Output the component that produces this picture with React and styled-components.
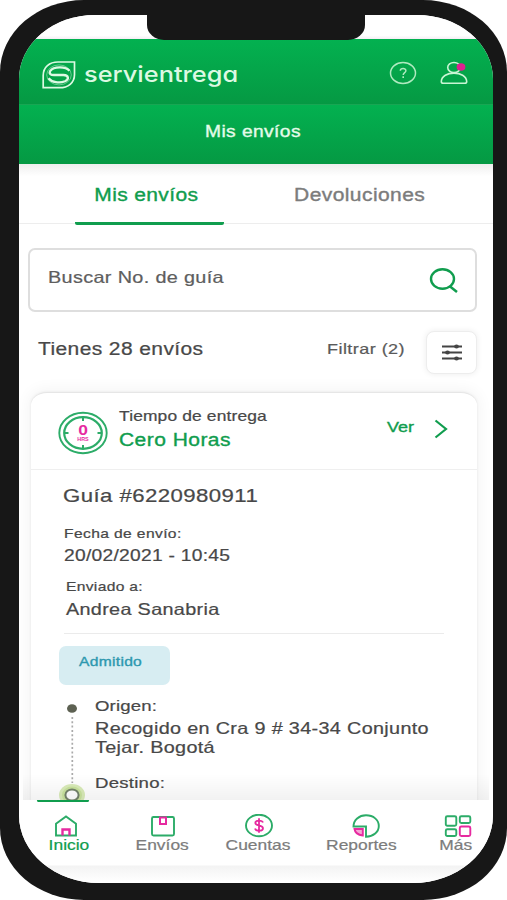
import React from "react"
import styled, { createGlobalStyle } from "styled-components"

const green = "#109d4e"
const pink = "#e62aa0"
const grey = "#7c7c7c"

const App = () => (
  <Phone>
    <GlobalStyle />
    <Notch />
    <Screen>
      <StatusBar />
      <TopBar>
        <Brand>
          <LogoIcon />
          <BrandName>servientrega</BrandName>
        </Brand>
        <Actions>
          <HelpIcon />
          <UserIcon />
        </Actions>
      </TopBar>
      <TitleBar>
        <Text $size={16} $track={0.35} $color="#e4fbe9" $center $bold>
          Mis envíos
        </Text>
      </TitleBar>
      <Tabs>
        <Tab $active>
          <Text $size={17.5} $track={0.3} $color={green} $center $bold>
            Mis envíos
          </Text>
        </Tab>
        <Tab>
          <Text $size={17.5} $track={0.35} $color={grey} $center $bold>
            Devoluciones
          </Text>
        </Tab>
      </Tabs>
      <Content>
        <Search>
          <Text $size={16.5} $track={0.3} $color="#5e5e5e">
            Buscar No. de guía
          </Text>
          <SearchIcon />
        </Search>
        <Summary>
          <Text $size={17.5} $track={0.33}>
            Tienes 28 envíos
          </Text>
          <Filter>
            <FilterLabel>
              <Text $size={15} $track={0.38} $color="#5a5a5a">
                Filtrar (2)
              </Text>
            </FilterLabel>
            <FilterButton>
              <SlidersIcon />
            </FilterButton>
          </Filter>
        </Summary>
        <Card>
          <CardHeader>
            <ClockIcon />
            <Delivery>
              <Text $size={14.5} $track={0.12}>
                Tiempo de entrega
              </Text>
              <Text $size={17.5} $track={0.38} $color={green} $line={28} $bold>
                Cero Horas
              </Text>
            </Delivery>
            <Ver>
              <Text $size={15} $color={green} $bold>
                Ver
              </Text>
            </Ver>
            <Chevron>
              <ChevronIcon />
            </Chevron>
          </CardHeader>
          <Details>
            <Text $size={18.5} $track={0.35} $line={24}>
              Guía #6220980911
            </Text>
            <Field $top={16} $indent={1}>
              <Text $size={13} $track={0.32}>
                Fecha de envío:
              </Text>
              <Text $size={16} $track={0.23} $line={24}>
                20/02/2021 - 10:45
              </Text>
            </Field>
            <Field $top={9} $indent={3}>
              <Text $size={13} $track={0.27}>
                Enviado a:
              </Text>
              <Text $size={16.5} $track={0.27} $line={24}>
                Andrea Sanabria
              </Text>
            </Field>
          </Details>
          <Divider />
          <Badge>
            <Text $size={13} $track={0.25} $color="#2d98af" $bold>
              Admitido
            </Text>
          </Badge>
          <Route>
            <RouteIcon />
            <Stops>
              <Text $size={15.5} $track={0.12}>
                Origen:
              </Text>
              <Address>
                <Text $size={16.5} $track={0.28} $line={19}>
                  Recogido en Cra 9 # 34-34 Conjunto
                </Text>
                <Text $size={16.5} $track={0.28} $line={19}>
                  Tejar. Bogotá
                </Text>
              </Address>
              <Text $size={15.5} $track={0.2}>
                Destino:
              </Text>
            </Stops>
          </Route>
        </Card>
      </Content>
      <NavBar>
        {items.map(({ name, Icon, width, active, shift }) => (
          <NavItem key={name} $width={width} $active={active} $shift={shift}>
            <Icon />
            <Text
              $size={14.5}
              $color={active ? green : grey}
              $center
              $line={18}
            >
              {name}
            </Text>
          </NavItem>
        ))}
      </NavBar>
    </Screen>
  </Phone>
)

export default App

const LogoIcon = () => (
  <svg width="34" height="28" viewBox="0 0 34 28" fill="none" stroke="#ddf9e3">
    <path
      d="M1.2 26.7V14.5C1.2 6 7.5 1 16 1H32.500V13.500C32.500 22 26 26.700 17.500 26.700Z"
      strokeWidth="1.700"
    />
    <ellipse
      cx="17"
      cy="13.900"
      rx="12.300"
      ry="10"
      strokeWidth="1"
      opacity="0.45"
    />
    <path
      d="M27.500 9.800C24 5.300 11.500 5.200 8.300 9.800C6.500 13 9 14 12 14H21.500C27 14.200 27.200 18.500 23 20.300C17.500 22.500 9.500 21.300 6.500 17.300"
      strokeWidth="2.300"
    />
  </svg>
)

const HelpIcon = () => (
  <svg width="28" height="24" viewBox="0 0 28 24" fill="none" stroke="#aeeabf">
    <ellipse cx="14" cy="12" rx="12.500" ry="10.500" strokeWidth="1.500" />
    <path
      d="M11.300 9.700C11.500 6.800 17 6.900 16.900 9.700C16.800 11.700 14.200 11.600 14.200 14"
      strokeWidth="1.500"
    />
    <path d="M13.400 16.200H15" strokeWidth="1.700" />
  </svg>
)

const UserIcon = () => (
  <svg width="28" height="25" viewBox="0 0 28 25" fill="none" stroke="#c9f5d4">
    <ellipse cx="14" cy="6.500" rx="6.300" ry="5" strokeWidth="1.600" />
    <path
      d="M1.300 20.500C1.500 9.300 26.400 9.300 26.700 20.500C26.700 21.800 26 22.300 24.800 22.300H3.200C2 22.300 1.300 21.800 1.300 20.500Z"
      fill="#03a249"
      strokeWidth="1.600"
    />
    <ellipse cx="21" cy="6" rx="4.400" ry="3.800" fill="#dd2090" stroke="none" />
  </svg>
)

const SearchIcon = () => (
  <svg width="30" height="28" viewBox="0 0 30 28" fill="none" stroke={green}>
    <ellipse cx="13.500" cy="12" rx="11.500" ry="9.700" strokeWidth="2.400" />
    <path d="M20.500 19L28 25" strokeWidth="2.500" />
  </svg>
)

const SlidersIcon = () => (
  <svg width="22" height="18" viewBox="0 0 22 18" fill="#444" stroke="#444">
    <path d="M1 2.500H21M1 8.500H21M1 14.500H21" strokeWidth="1.900" />
    <g stroke="none">
      <ellipse cx="15.500" cy="2.500" rx="2.400" ry="1.900" />
      <ellipse cx="6.500" cy="8.500" rx="2.400" ry="1.900" />
      <ellipse cx="15.500" cy="14.500" rx="2.400" ry="1.900" />
    </g>
  </svg>
)

const ClockIcon = () => (
  <svg width="50" height="44" viewBox="0 0 50 44" fill="none" stroke="#2cac68">
    <ellipse cx="25" cy="22" rx="23.700" ry="20.200" strokeWidth="1.900" />
    <ellipse cx="25" cy="22" rx="18.800" ry="15.800" strokeWidth="2.200" />
    <path d="M25 6V10M25 34V38M6.500 22H10.500M39.500 22H43.500" strokeWidth="2" />
    <g transform="translate(25 0) scale(1.2 1)" fill={pink} stroke="none">
      <ClockText y="24.500" fontSize="14.500">
        0
      </ClockText>
      <ClockText y="30" fontSize="4.500">
        HRS
      </ClockText>
    </g>
  </svg>
)

const ChevronIcon = () => (
  <svg width="14" height="20" viewBox="0 0 14 20" fill="none" stroke={green}>
    <path d="M1.500 1.500L12 10L1.500 18.500" strokeWidth="2.200" />
  </svg>
)

const RouteIcon = () => (
  <svg width="28" height="104" viewBox="0 0 28 104" fill="none">
    <ellipse cx="14" cy="9.500" rx="5" ry="4.300" fill="#5d6152" />
    <path
      d="M14.300 18V84"
      stroke="#aaa"
      strokeWidth="1.700"
      strokeDasharray="2 2.300"
    />
    <ellipse cx="14" cy="96" rx="13" ry="11" fill="#d9ebb8" />
    <ellipse cx="14" cy="96" rx="10" ry="8.500" fill="#c8e29d" />
    <ellipse
      cx="14"
      cy="96"
      rx="6.600"
      ry="5.600"
      fill="#fff"
      stroke="#74836a"
      strokeWidth="2"
    />
  </svg>
)

const HomeIcon = () => (
  <NavIcon viewBox="0 0 28 26">
    <path d="M4 21.500V9.800L14 2.500L24 9.800V21.500Z" stroke="#2cac68" />
    <path d="M10.500 21.500V15.500H17.500V21.500" stroke={pink} strokeWidth="2.400" />
  </NavIcon>
)

const BoxIcon = () => (
  <NavIcon viewBox="0 0 28 26">
    <rect x="3" y="3" width="22" height="18.500" rx="1.500" stroke="#2cac68" />
    <path d="M11 3.500V10H17V3.500Z" stroke={pink} strokeWidth="2" />
  </NavIcon>
)

const MoneyIcon = () => (
  <NavIcon viewBox="0 0 28 26">
    <ellipse cx="14" cy="11.500" rx="13" ry="10.800" stroke="#2cac68" />
    <path
      d="M18 8.500C17 5.800 10.300 5.900 10.300 8.900C10.300 12 18 10.700 18 14.200C18 17.600 10.800 17.400 10 14.500M14 4.300V18.700"
      stroke={pink}
      strokeWidth="1.800"
    />
  </NavIcon>
)

const ReportIcon = () => (
  <NavIcon viewBox="0 0 28 26">
    <path
      d="M1.500 12.500C1.500 6 7 1.300 14 1.300C21.500 1.300 26.800 6 26.800 12C26.800 18 21.500 22.500 14 22.700V12.500Z"
      stroke="#2cac68"
    />
    <path
      d="M2.500 15H10.800V21.500C6.500 21 3 18.500 2.500 15Z"
      stroke={pink}
      fill="#f6a4d4"
      strokeWidth="1.900"
    />
  </NavIcon>
)

const MoreIcon = () => (
  <NavIcon viewBox="0 0 28 26">
    <g stroke="#2cac68">
      <rect x="1.800" y="2.200" width="10.500" height="9.500" rx="1.500" />
      <rect x="15.800" y="2.200" width="10.500" height="6.800" rx="1.500" />
      <rect x="1.800" y="15.200" width="10.500" height="6.800" rx="1.500" />
    </g>
    <rect x="15.800" y="12.500" width="10.500" height="9.500" rx="1.500" stroke={pink} />
  </NavIcon>
)

const items = [
  { name: "Inicio", Icon: HomeIcon, width: 99, active: true, shift: -6 },
  { name: "Envíos", Icon: BoxIcon, width: 89, shift: 1 },
  { name: "Cuentas", Icon: MoneyIcon, width: 103 },
  { name: "Reportes", Icon: ReportIcon, width: 102, shift: 10 },
  { name: "Más", Icon: MoreIcon, width: 87, shift: 5 },
]

const GlobalStyle = createGlobalStyle`
  * {
    box-sizing: border-box;
  }

  body {
    margin: 0;
    background: #fff;
    overflow: hidden;
    font-family: "Liberation Sans", Arial, sans-serif;
  }

  svg {
    display: block;
    flex: none;
  }
`

const Phone = styled.div`
  position: relative;
  width: 507px;
  height: 900px;
  padding: 15px 14px 17px 19px;
  background: #171717;
  border-radius: 84px / 72px;
`

const Notch = styled.div`
  position: absolute;
  z-index: 1;
  top: 14px;
  left: 147px;
  width: 218px;
  height: 26px;
  background: #171717;
  border-radius: 0 0 17px 17px / 0 0 15px 15px;
`

const Screen = styled.div`
  display: flex;
  flex-direction: column;
  height: 868px;
  overflow: hidden;
  background: #fff;
  border-radius: 76px 76px 80px 80px / 64px 64px 68px 68px;
`

const StatusBar = styled.div`
  height: 24px;
  flex: none;
  background: linear-gradient(#fff 85%, #f4eef4);
`

// wide grotesque lettering, stretched from the regular face
const Text = styled.span`
  display: block;
  width: max-content;
  font-size: ${p => p.$size}px;
  line-height: ${p => p.$line || 20}px;
  letter-spacing: ${p => p.$track || 0}px;
  color: ${p => p.$color || "#484848"};
  white-space: nowrap;
  transform: scaleX(1.2);
  transform-origin: ${p => (p.$center ? "center" : "left")};
  -webkit-text-stroke: ${p => (p.$bold ? 0.35 : 0.22)}px currentColor;
`

const TopBar = styled.header`
  display: flex;
  justify-content: space-between;
  height: 66px;
  flex: none;
  padding: 22px 25px 0 23px;
  background: linear-gradient(#03b150, #059943);
  border-bottom: 1px solid #18a653;
`

const Brand = styled.div`
  display: flex;
`

const BrandName = styled.span`
  margin-left: 8px;
  font-family: Inter, sans-serif;
  font-size: 21.5px;
  font-weight: 500;
  line-height: 26px;
  font-feature-settings: "cv11";
  color: #dcf9e3;
  transform: scaleX(1.18);
  transform-origin: left;
`

const Actions = styled.div`
  display: flex;
  gap: 23px;
`

const TitleBar = styled.div`
  display: flex;
  justify-content: center;
  height: 59px;
  flex: none;
  padding: 17px 6px 0 0;
  background: linear-gradient(#03b150, #059943);
`

const Tabs = styled.nav`
  display: flex;
  height: 60px;
  flex: none;
  padding: 0 56px;
  gap: 64px;
  background: linear-gradient(#eeeeee, #fff 12px);
  border-bottom: 1px solid #ededed;
`

const Tab = styled.div`
  display: flex;
  justify-content: center;
  width: 149px;
  height: 61px;
  padding: 21px 6px 0 0;
  border-bottom: ${p => (p.$active ? `3px solid ${green}` : "none")};
  border-radius: 2px;
`

const Content = styled.main`
  position: relative;
  height: 576px;
  flex: none;
  overflow: hidden;
  padding: 24px 16px 0 9px;

  &::after {
    content: "";
    position: absolute;
    left: 4px;
    right: 4px;
    bottom: 0;
    height: 26px;
    background: linear-gradient(transparent, rgba(0, 0, 0, 0.05));
  }
`

const Search = styled.div`
  display: flex;
  justify-content: space-between;
  width: 449px;
  height: 64px;
  padding: 17px 16px 0 18px;
  border: 2px solid #dedede;
  border-radius: 7px;
`

const Summary = styled.div`
  display: flex;
  justify-content: space-between;
  height: 61px;
  margin-top: 19px;
  padding: 8px 0 0 10px;
`

const Filter = styled.div`
  display: flex;
  margin-top: -8px;
`

const FilterLabel = styled.div`
  width: 99px;
  padding-top: 8px;
`

const FilterButton = styled.div`
  display: flex;
  align-items: center;
  justify-content: center;
  width: 51px;
  height: 43px;
  border: 1px solid #ededed;
  border-radius: 8px;
  background: #fff;
  box-shadow: 0 0 6px rgba(0, 0, 0, 0.08);
`

const Card = styled.section`
  width: 446px;
  height: 480px;
  margin-left: 3px;
  background: #fff;
  border-top: 1px solid #e6e6e6;
  border-radius: 16px 16px 0 0 / 13px 13px 0 0;
  box-shadow: 0 0 3px rgba(0, 0, 0, 0.08), 0 0 14px 4px rgba(0, 0, 0, 0.04);
`

const CardHeader = styled.div`
  display: flex;
  height: 77px;
  padding: 18px 29px 0 27px;
  border-bottom: 1px solid #efefef;
`

const Delivery = styled.div`
  margin: -5px 0 0 11px;
`

const Ver = styled.div`
  width: 47px;
  margin: 6px 0 0 auto;
`

const Chevron = styled.div`
  padding-top: 8px;
`

const Details = styled.div`
  padding: 14px 32px 0;
`

const Field = styled.div`
  margin-top: ${p => p.$top}px;
  padding-left: ${p => p.$indent || 0}px;
`

const Divider = styled.div`
  height: 1px;
  margin: 12px 33px 12px;
  background: #ebebeb;
`

const Badge = styled.div`
  width: 111px;
  height: 39px;
  margin-left: 28px;
  padding: 6px 20px 0;
  border-radius: 7px;
  background: #d7edf2;
`

const Route = styled.div`
  display: flex;
  padding: 14px 0 0 27px;
`

const Stops = styled.div`
  margin: -3px 0 0 9px;
`

const Address = styled.div`
  margin: 3px 0 16px;
`

const NavBar = styled.nav`
  display: flex;
  height: 83px;
  flex: none;
  background: linear-gradient(#fff 65px, #f3f3f3 66px, #fff 82px);
`

const NavItem = styled.div`
  display: flex;
  flex: none;
  flex-direction: column;
  align-items: center;
  width: ${p => p.$width}px;
  padding-top: 14px;

  &::before {
    content: "";
    display: ${p => (p.$active ? "block" : "none")};
    width: 52px;
    height: 3px;
    margin: -15px 0 12px -11px;
    background: ${green};
    border-radius: 2px;
  }

  svg {
    margin-left: ${p => p.$shift || 0}px;
  }
`

const NavIcon = styled.svg`
  width: 28px;
  height: 26px;
  margin-bottom: -4px;
  fill: none;
  stroke-width: 1.9;
`

const ClockText = styled.text`
  font-family: "Liberation Sans", Arial, sans-serif;
  font-weight: 700;
  text-anchor: middle;
`
